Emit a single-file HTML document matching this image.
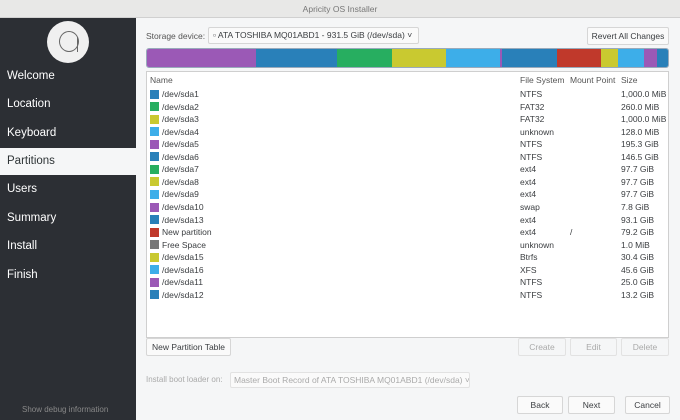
<!DOCTYPE html><html><head><style>
*{margin:0;padding:0;box-sizing:border-box}
body{width:680px;height:420px;background:#f5f6f7;font-family:"Liberation Sans",sans-serif;font-size:8.5px;color:#3a3d40;position:relative;overflow:hidden}
.a{position:absolute;white-space:nowrap}
.title{left:0;top:0;width:680px;height:18px;background:#e8e8e7;border-bottom:1px solid #d0d0d0;text-align:center;line-height:18px;color:#777;font-size:8.5px}
.side{left:0;top:18px;width:136px;height:402px;background:#2c2f34}
.nav{left:0;width:136px;height:27px;line-height:27px;padding-left:7px;color:#fff;font-size:11.5px}
.btn{position:absolute;white-space:nowrap;overflow:hidden;background:#fafafa;border:1px solid #d6d6d6;border-radius:2px;text-align:center;line-height:17px;font-size:8.5px}
.dis{color:#aaa;background:#f5f6f7;border-color:#e2e2e2}
.sw{position:absolute;left:3px;width:9px;height:9px}
.row{position:absolute;left:0;width:520px;height:12px;line-height:12px;white-space:nowrap}
.row span{position:absolute}
</style></head><body>
<div class="a title">Apricity OS Installer</div>
<div class="a side"></div>
<div class="a" style="left:47px;top:21px;width:42px;height:42px;border-radius:50%;background:#f0f0f0"></div>
<div class="a" style="left:59px;top:31px;width:20px;height:21px;border:1.3px solid #666;border-radius:50%"></div>
<div class="a" style="left:77px;top:37px;width:1.3px;height:15px;background:#666"></div>
<div class="a nav" style="top:63px">Welcome</div>
<div class="a nav" style="top:91px">Location</div>
<div class="a nav" style="top:120px">Keyboard</div>
<div class="a nav" style="top:148px;background:#f5f6f7;color:#2e3436">Partitions</div>
<div class="a nav" style="top:176px">Users</div>
<div class="a nav" style="top:205px">Summary</div>
<div class="a nav" style="top:233px">Install</div>
<div class="a nav" style="top:262px">Finish</div>
<div class="a" style="left:22px;top:405px;color:#888;font-size:8px">Show debug information</div>

<div class="a" style="left:146px;top:31px;color:#555">Storage device:</div>
<div class="btn" style="left:208px;top:27px;width:211px;height:17px;line-height:15px;text-align:left;padding-left:4px">▫ ATA TOSHIBA MQ01ABD1 - 931.5 GiB (/dev/sda) ˅</div>
<div class="btn" style="left:587px;top:27px;width:82px;height:18px;line-height:16px">Revert All Changes</div>

<div class="a" style="left:146px;top:48px;width:523px;height:20px;border-radius:3px;overflow:hidden;display:flex;border:1px solid #9ab">
<div style="width:109px;background:#9b59b6"></div><div style="width:81px;background:#2980b9"></div><div style="width:55px;background:#27ae60"></div><div style="width:54px;background:#c9c930"></div><div style="width:54px;background:#3daee9"></div><div style="width:2px;background:#9b59b6"></div><div style="width:55px;background:#2980b9"></div><div style="width:44px;background:#c0392b"></div><div style="width:17px;background:#c9c930"></div><div style="width:26px;background:#3daee9"></div><div style="width:13px;background:#9b59b6"></div><div style="flex:1;background:#2980b9"></div></div>

<div class="a" style="left:146px;top:71px;width:523px;height:267px;background:#fff;border:1px solid #cfcfcf">
<div class="row" style="top:2px;color:#555"><span style="left:3px">Name</span><span style="left:373px">File System</span><span style="left:423px">Mount Point</span><span style="left:474px">Size</span></div>
<div id="rows"></div>
</div>
<script>
var d=[["#2980b9","sda1","NTFS","","1,000.0 MiB"],["#27ae60","sda2","FAT32","","260.0 MiB"],["#c9c930","sda3","FAT32","","1,000.0 MiB"],["#3daee9","sda4","unknown","","128.0 MiB"],["#9b59b6","sda5","NTFS","","195.3 GiB"],["#2980b9","sda6","NTFS","","146.5 GiB"],["#27ae60","sda7","ext4","","97.7 GiB"],["#c9c930","sda8","ext4","","97.7 GiB"],["#3daee9","sda9","ext4","","97.7 GiB"],["#9b59b6","sda10","swap","","7.8 GiB"],["#2980b9","sda13","ext4","","93.1 GiB"],["#c0392b","New partition","ext4","/","79.2 GiB"],["#777","Free Space","unknown","","1.0 MiB"],["#c9c930","sda15","Btrfs","","30.4 GiB"],["#3daee9","sda16","XFS","","45.6 GiB"],["#9b59b6","sda11","NTFS","","25.0 GiB"],["#2980b9","sda12","NTFS","","13.2 GiB"]];
var h="";d.forEach(function(r,i){var n=r[1].indexOf("sda")==0?"/dev/"+r[1]:r[1];h+='<div class="row" style="top:'+(16+i*12.56)+'px"><div class="sw" style="top:1.5px;background:'+r[0]+'"></div><span style="left:15px">'+n+'</span><span style="left:373px">'+r[2]+'</span><span style="left:423px">'+r[3]+'</span><span style="left:474px">'+r[4]+'</span></div>'});
document.getElementById("rows").innerHTML=h;
</script>
<div class="btn" style="left:146px;top:338px;width:85px;height:18px">New Partition Table</div>
<div class="btn dis" style="left:518px;top:338px;width:48px;height:18px">Create</div>
<div class="btn dis" style="left:570px;top:338px;width:47px;height:18px">Edit</div>
<div class="btn dis" style="left:621px;top:338px;width:48px;height:18px">Delete</div>
<div class="a" style="left:146px;top:375px;color:#aaa;font-size:8px">Install boot loader on:</div>
<div class="btn dis" style="left:230px;top:372px;width:240px;height:16px;line-height:14px;background:#fafafa;text-align:left;padding-left:3px">Master Boot Record of ATA TOSHIBA MQ01ABD1 (/dev/sda) ˅</div>
<div class="btn" style="left:517px;top:396px;width:46px;height:18px">Back</div>
<div class="btn" style="left:568px;top:396px;width:47px;height:18px">Next</div>
<div class="btn" style="left:625px;top:396px;width:45px;height:18px">Cancel</div>
</body></html>
